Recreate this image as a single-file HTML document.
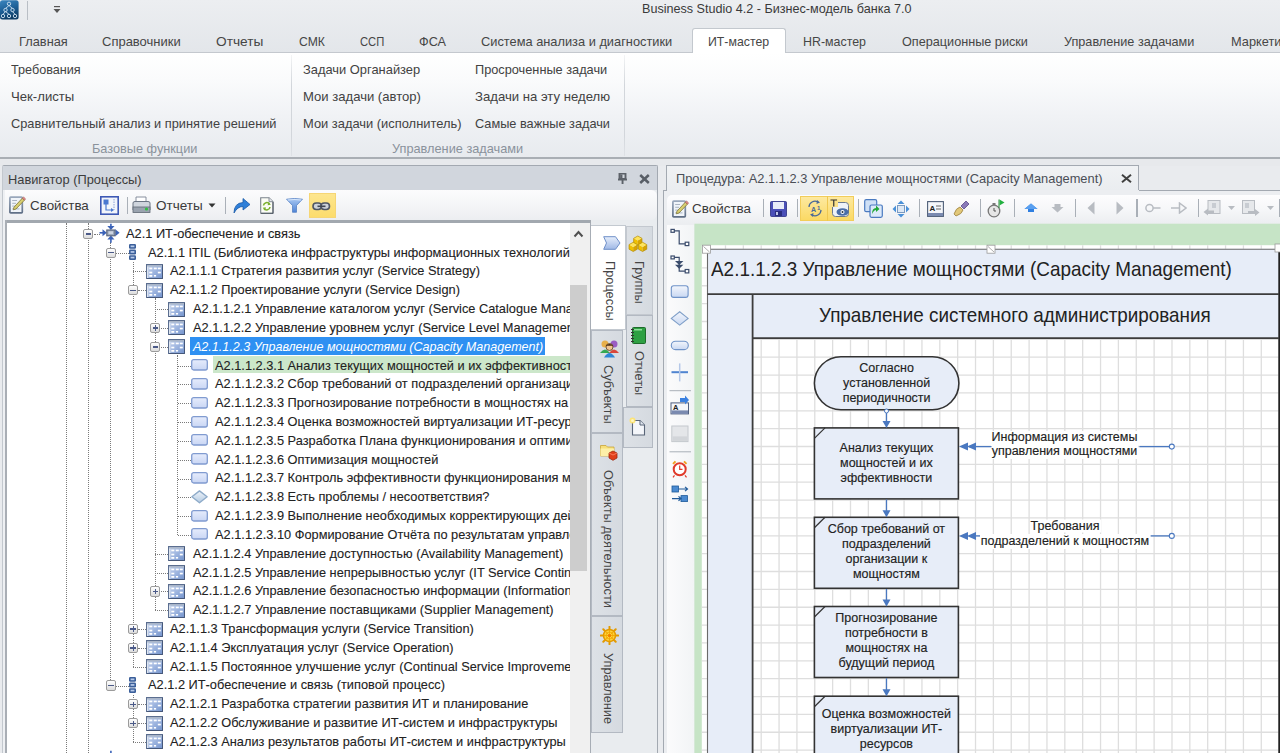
<!DOCTYPE html>
<html><head><meta charset="utf-8"><style>
html,body{margin:0;padding:0}
body{width:1280px;height:753px;overflow:hidden;position:relative;background:#e9ebee;font-family:"Liberation Sans",sans-serif}
.a{position:absolute}
.t{position:absolute;white-space:nowrap;line-height:1}
.vl{width:0;border-left:1px dotted #7a7a7a}
.hl{height:0;border-top:1px dotted #7a7a7a}
.exp{width:10.2px;height:10.2px;box-sizing:border-box;border:1px solid #9b9b9b;border-radius:2px;background:linear-gradient(#ffffff,#dcdcdc)}
</style></head><body>
<div class="a" style="left:0.0px;top:0.0px;width:1280.0px;height:53.0px;background:linear-gradient(#eceef1,#e3e6ea)"></div>
<svg class="a" style="left:0;top:0" width="19" height="20" viewBox="0 0 19 20">
<defs><linearGradient id="appg" x1="0" y1="0" x2="0.3" y2="1"><stop offset="0" stop-color="#3b86bf"/><stop offset="0.55" stop-color="#1d5f96"/><stop offset="1" stop-color="#0f3e66"/></linearGradient></defs>
<rect x="0" y="0.3" width="18.6" height="19.3" rx="2.5" fill="url(#appg)"/>
<g stroke="#cfe2f2" stroke-width="0.9" fill="none"><path d="M9 5.5 L5.5 8.5 M9 5.5 L12.5 8.5 M5.5 11.5 L3 14.3 M5.5 11.5 L9 14.3 M12.5 11.5 L15 14.3"/>
<circle cx="9" cy="3.8" r="1.7"/><circle cx="5.5" cy="10" r="1.7"/><circle cx="12.5" cy="10" r="1.7"/>
<circle cx="3" cy="16" r="1.7"/><circle cx="9" cy="16" r="1.7"/><circle cx="15" cy="16" r="1.7"/></g></svg>
<div class="a" style="left:27.0px;top:1.0px;width:1.0px;height:19.0px;background:#b9bec5"></div>
<svg class="a" style="left:53px;top:5px" width="8" height="9"><rect x="1" y="1" width="6" height="1.2" fill="#555"/><path d="M0.5 4 L7.5 4 L4 8 Z" fill="#555"/></svg>
<div class="t" style="left:641.7px;top:1.8px;font-size:13.14px;color:#3a3a3a;;transform:scaleX(0.9597);transform-origin:0 0;">Business Studio 4.2 - Бизнес-модель банка 7.0</div>
<div class="a" style="left:692.3px;top:27.7px;width:93.3px;height:26.0px;background:#fff;border:1px solid #c3c8ce;border-bottom:none;border-radius:3px 3px 0 0;box-sizing:border-box"></div>
<div class="a" style="left:0.0px;top:52.0px;width:692.3px;height:1.0px;background:#c4c8ce"></div>
<div class="a" style="left:785.6px;top:52.0px;width:494.4px;height:1.0px;background:#c4c8ce"></div>
<div class="t" style="left:18.7px;top:35.1px;font-size:13.30px;color:#464646;;transform:scaleX(0.9640);transform-origin:0 0;">Главная</div>
<div class="t" style="left:102.4px;top:35.1px;font-size:13.30px;color:#464646;;transform:scaleX(0.9769);transform-origin:0 0;">Справочники</div>
<div class="t" style="left:216.3px;top:35.1px;font-size:13.30px;color:#464646;;transform:scaleX(1.0290);transform-origin:0 0;">Отчеты</div>
<div class="t" style="left:298.8px;top:35.1px;font-size:13.30px;color:#464646;;transform:scaleX(0.9158);transform-origin:0 0;">СМК</div>
<div class="t" style="left:360.0px;top:35.1px;font-size:13.30px;color:#464646;;transform:scaleX(0.8448);transform-origin:0 0;">ССП</div>
<div class="t" style="left:419.2px;top:35.1px;font-size:13.30px;color:#464646;;transform:scaleX(0.9542);transform-origin:0 0;">ФСА</div>
<div class="t" style="left:480.6px;top:35.1px;font-size:13.30px;color:#464646;;transform:scaleX(0.9634);transform-origin:0 0;">Система анализа и диагностики</div>
<div class="t" style="left:707.5px;top:35.1px;font-size:13.30px;color:#464646;;transform:scaleX(0.9253);transform-origin:0 0;">ИТ-мастер</div>
<div class="t" style="left:803.0px;top:35.1px;font-size:13.30px;color:#464646;;transform:scaleX(0.9325);transform-origin:0 0;">HR-мастер</div>
<div class="t" style="left:901.9px;top:35.1px;font-size:13.30px;color:#464646;;transform:scaleX(0.9522);transform-origin:0 0;">Операционные риски</div>
<div class="t" style="left:1064.4px;top:35.1px;font-size:13.30px;color:#464646;;transform:scaleX(0.9521);transform-origin:0 0;">Управление задачами</div>
<div class="t" style="left:1230.6px;top:35.1px;font-size:13.30px;color:#464646;;transform:scaleX(0.9624);transform-origin:0 0;">Маркетинг</div>
<div class="a" style="left:0.0px;top:53.0px;width:1280.0px;height:105.5px;background:linear-gradient(#ffffff 0%,#fafbfc 25%,#f0f2f5 60%,#e7eaee 100%)"></div>
<div class="a" style="left:0.0px;top:157.2px;width:1280.0px;height:1.8px;background:#a9aeb4"></div>
<div class="a" style="left:0.0px;top:159.0px;width:1280.0px;height:6.5px;background:#e7e9ec"></div>
<div class="a" style="left:290.6px;top:55.0px;width:1.0px;height:101.0px;background:linear-gradient(rgba(200,204,210,0.2),#d2d6db 30%,#d2d6db 80%,rgba(200,204,210,0.3))"></div>
<div class="a" style="left:623.8px;top:55.0px;width:1.0px;height:101.0px;background:linear-gradient(rgba(200,204,210,0.2),#d2d6db 30%,#d2d6db 80%,rgba(200,204,210,0.3))"></div>
<div class="t" style="left:11.2px;top:63.3px;font-size:13.30px;color:#424242;;transform:scaleX(0.9507);transform-origin:0 0;">Требования</div>
<div class="t" style="left:11.2px;top:90.3px;font-size:13.30px;color:#424242;;transform:scaleX(0.9891);transform-origin:0 0;">Чек-листы</div>
<div class="t" style="left:11.2px;top:117.2px;font-size:13.30px;color:#424242;;transform:scaleX(0.9609);transform-origin:0 0;">Сравнительный анализ и принятие решений</div>
<div class="t" style="left:303.4px;top:63.3px;font-size:13.30px;color:#424242;;transform:scaleX(0.9691);transform-origin:0 0;">Задачи Органайзер</div>
<div class="t" style="left:303.4px;top:90.3px;font-size:13.30px;color:#424242;;transform:scaleX(0.9833);transform-origin:0 0;">Мои задачи (автор)</div>
<div class="t" style="left:303.4px;top:117.2px;font-size:13.30px;color:#424242;;transform:scaleX(0.9694);transform-origin:0 0;">Мои задачи (исполнитель)</div>
<div class="t" style="left:475.3px;top:63.3px;font-size:13.30px;color:#424242;;transform:scaleX(0.9589);transform-origin:0 0;">Просроченные задачи</div>
<div class="t" style="left:475.3px;top:90.3px;font-size:13.30px;color:#424242;;transform:scaleX(0.9873);transform-origin:0 0;">Задачи на эту неделю</div>
<div class="t" style="left:475.3px;top:117.2px;font-size:13.30px;color:#424242;;transform:scaleX(0.9585);transform-origin:0 0;">Самые важные задачи</div>
<div class="t" style="left:91.9px;top:141.7px;font-size:13.30px;color:#8a929c;;transform:scaleX(0.9572);transform-origin:0 0;">Базовые функции</div>
<div class="t" style="left:391.9px;top:141.7px;font-size:13.30px;color:#8a929c;;transform:scaleX(0.9586);transform-origin:0 0;">Управление задачами</div>
<div class="a" style="left:2.0px;top:165.2px;width:655.5px;height:588.0px;background:#e9ecef;border:1px solid #a3a9b1;border-left-color:#c3c8ce;border-bottom:none;box-sizing:border-box;border-radius:2px 2px 0 0"></div>
<div class="a" style="left:3.0px;top:166.2px;width:653.5px;height:24.0px;background:#d1d6dd"></div>
<div class="t" style="left:8.4px;top:172.5px;font-size:13.30px;color:#3c3c3c;;transform:scaleX(0.9646);transform-origin:0 0;">Навигатор (Процессы)</div>
<svg class="a" style="left:617.5px;top:172.5px" width="9" height="11" viewBox="0 0 9 11"><path d="M1.5 0.5 H7.5 V6 H1.5Z M3.5 1.8 V5.5" fill="none" stroke="#5c6269" stroke-width="1.9"/><rect x="0" y="5.6" width="9" height="1.9" fill="#5c6269"/><rect x="3.6" y="7" width="1.9" height="4" fill="#5c6269"/></svg>
<svg class="a" style="left:639px;top:173.5px" width="11" height="10" viewBox="0 0 11 10"><path d="M1.2 1 L9.8 9 M9.8 1 L1.2 9" stroke="#585e66" stroke-width="2.5"/></svg>
<div class="a" style="left:3.0px;top:190.3px;width:653.5px;height:30.0px;background:linear-gradient(#fcfcfd,#f3f4f6 60%,#eceef1);border-radius:0 6px 6px 0"></div>
<div class="a" style="left:4.8px;top:220.3px;width:586.0px;height:2.8px;background:#a2a8af"></div>
<div class="a" style="left:6.8px;top:223.1px;width:563.5px;height:530.0px;background:#fff"></div>
<div class="a" style="left:3.0px;top:190.0px;width:1.8px;height:563.0px;background:#eef0f3"></div>
<div class="a" style="left:4.8px;top:220.3px;width:2.0px;height:533.0px;background:#a9aeb5"></div>
<div class="a" style="left:569.5px;top:222.7px;width:20.0px;height:531.0px;background:#f0f0f0"></div>
<div class="a" style="left:570.0px;top:285.1px;width:17.0px;height:285.8px;background:#cdcdcd"></div>
<svg class="a" style="left:573px;top:230px" width="11" height="8" viewBox="0 0 11 8"><path d="M1.5 6.5 L5.5 2 L9.5 6.5" stroke="#505050" stroke-width="2" fill="none"/></svg>
<div class="a" style="left:589.5px;top:222.7px;width:1.6px;height:531.0px;background:#a7adb5"></div>
<div class="a" style="left:5px;top:222.7px;width:565px;height:531px;overflow:hidden"><div class="a vl" style="left:60.9px;top:0.0px;height:530.3px"></div>
<div class="a vl" style="left:83.4px;top:0.0px;height:530.3px"></div>
<div class="a vl" style="left:105.3px;top:19.2px;height:443.7px"></div>
<div class="a vl" style="left:127.6px;top:39.0px;height:405.0px"></div>
<div class="a vl" style="left:127.6px;top:471.9px;height:47.5px"></div>
<div class="a vl" style="left:150.0px;top:75.7px;height:311.9px"></div>
<div class="a vl" style="left:172.3px;top:132.1px;height:180.2px"></div>
<div class="a hl" style="left:88.6px;top:11.2px;width:6.4px"></div>
<div class="a exp" style="left:78.3px;top:6.1px"></div><div class="a" style="left:80.8px;top:10.6px;width:5.5px;height:1.4px;background:#4b5a88"></div>
<svg class="a" style="left:93.0px;top:-0.7px" width="22" height="22" viewBox="0 0 22 22">
<g fill="#3a62b8"><path d="M12.9 1.8 V5" stroke="#3a62b8" stroke-width="1.6"/><path d="M9.3 4 H16.5 L12.9 8 Z"/>
<path d="M12.9 17 V20.8" stroke="#3a62b8" stroke-width="1.6"/><path d="M9.3 17.5 H16.5 L12.9 13.6 Z"/>
<path d="M1.5 10.8 H5.5" stroke="#3a62b8" stroke-width="1.6"/><path d="M4.5 7.3 L8.8 10.8 L4.5 14.3 Z"/>
<path d="M17.3 7.3 L21.6 10.8 L17.3 14.3 Z"/></g>
<rect x="8.8" y="8" width="8.2" height="5.8" fill="#9aa6b8" stroke="#56627a" stroke-width="1.1"/><rect x="10.5" y="9.3" width="4.5" height="2.8" fill="#cdd5e2"/></svg>
<div class="t" style="left:120.6px;top:4.1px;font-size:13.30px;color:#222;-webkit-text-stroke:0.1px #222;transform:scaleX(0.9624);transform-origin:0 0;">A2.1 ИТ-обеспечение и связь</div>
<div class="a hl" style="left:110.9px;top:30.0px;width:12.9px"></div>
<div class="a exp" style="left:100.6px;top:24.9px"></div><div class="a" style="left:103.1px;top:29.4px;width:5.5px;height:1.4px;background:#4b5a88"></div>
<svg class="a" style="left:123.8px;top:21.4px" width="8" height="17" viewBox="0 0 8 17">
<g fill="#3b5f9a"><rect x="0" y="0" width="7" height="4.8" rx="1.2"/><rect x="0" y="5.6" width="7" height="4.8" rx="1.2"/><rect x="0" y="11.2" width="7" height="4.8" rx="1.2"/></g>
<g fill="#b8cbea"><rect x="1.6" y="1.5" width="3.8" height="1.7"/><rect x="1.6" y="7.1" width="3.8" height="1.7"/><rect x="1.6" y="12.7" width="3.8" height="1.7"/></g></svg>
<div class="t" style="left:142.9px;top:23.0px;font-size:13.30px;color:#222;-webkit-text-stroke:0.1px #222;transform:scaleX(0.9624);transform-origin:0 0;">A2.1.1 ITIL (Библиотека инфраструктуры информационных технологий)</div>
<div class="a hl" style="left:128.0px;top:48.8px;width:12.8px"></div>
<svg class="a" style="left:140.8px;top:41.3px" width="17" height="15" viewBox="0 0 17 15">
<defs><linearGradient id="dg2" x1="0" y1="0" x2="1" y2="1"><stop offset="0" stop-color="#c9d6ee"/><stop offset="0.5" stop-color="#9fb6e0"/><stop offset="1" stop-color="#7393cc"/></linearGradient></defs>
<rect x="0.5" y="0.5" width="16" height="14" fill="url(#dg2)" stroke="#5b6e90" stroke-width="1"/>
<rect x="1" y="1" width="15" height="1.6" fill="#aab6c9"/><rect x="1" y="2.6" width="1.4" height="11.4" fill="#dde4ef"/>
<g fill="#fff"><rect x="3.3" y="3.6" width="3" height="1.7"/><rect x="7.8" y="3.6" width="3" height="1.7"/><rect x="11.8" y="3.6" width="3" height="1.7"/><rect x="3.3" y="7.7" width="3" height="1.7"/><rect x="11.8" y="7.7" width="3" height="1.7"/><rect x="3.3" y="11" width="3" height="1.8"/><rect x="7.9" y="11" width="2.2" height="1.6"/></g>
<path d="M16.5 1 V14.5 H1" stroke="#46587a" stroke-width="1" fill="none"/></svg>
<div class="t" style="left:165.2px;top:41.8px;font-size:13.30px;color:#222;-webkit-text-stroke:0.1px #222;transform:scaleX(0.9624);transform-origin:0 0;">A2.1.1.1 Стратегия развития услуг (Service Strategy)</div>
<div class="a hl" style="left:133.2px;top:67.7px;width:7.6px"></div>
<div class="a exp" style="left:122.9px;top:62.6px"></div><div class="a" style="left:125.4px;top:67.1px;width:5.5px;height:1.4px;background:#4b5a88"></div>
<svg class="a" style="left:140.8px;top:60.2px" width="17" height="15" viewBox="0 0 17 15">
<defs><linearGradient id="dg3" x1="0" y1="0" x2="1" y2="1"><stop offset="0" stop-color="#c9d6ee"/><stop offset="0.5" stop-color="#9fb6e0"/><stop offset="1" stop-color="#7393cc"/></linearGradient></defs>
<rect x="0.5" y="0.5" width="16" height="14" fill="url(#dg3)" stroke="#5b6e90" stroke-width="1"/>
<rect x="1" y="1" width="15" height="1.6" fill="#aab6c9"/><rect x="1" y="2.6" width="1.4" height="11.4" fill="#dde4ef"/>
<g fill="#fff"><rect x="3.3" y="3.6" width="3" height="1.7"/><rect x="7.8" y="3.6" width="3" height="1.7"/><rect x="11.8" y="3.6" width="3" height="1.7"/><rect x="3.3" y="7.7" width="3" height="1.7"/><rect x="11.8" y="7.7" width="3" height="1.7"/><rect x="3.3" y="11" width="3" height="1.8"/><rect x="7.9" y="11" width="2.2" height="1.6"/></g>
<path d="M16.5 1 V14.5 H1" stroke="#46587a" stroke-width="1" fill="none"/></svg>
<div class="t" style="left:165.2px;top:60.6px;font-size:13.30px;color:#222;-webkit-text-stroke:0.1px #222;transform:scaleX(0.9624);transform-origin:0 0;">A2.1.1.2 Проектирование услуги (Service Design)</div>
<div class="a hl" style="left:150.3px;top:86.5px;width:12.8px"></div>
<svg class="a" style="left:163.1px;top:79.0px" width="17" height="15" viewBox="0 0 17 15">
<defs><linearGradient id="dg4" x1="0" y1="0" x2="1" y2="1"><stop offset="0" stop-color="#c9d6ee"/><stop offset="0.5" stop-color="#9fb6e0"/><stop offset="1" stop-color="#7393cc"/></linearGradient></defs>
<rect x="0.5" y="0.5" width="16" height="14" fill="url(#dg4)" stroke="#5b6e90" stroke-width="1"/>
<rect x="1" y="1" width="15" height="1.6" fill="#aab6c9"/><rect x="1" y="2.6" width="1.4" height="11.4" fill="#dde4ef"/>
<g fill="#fff"><rect x="3.3" y="3.6" width="3" height="1.7"/><rect x="7.8" y="3.6" width="3" height="1.7"/><rect x="11.8" y="3.6" width="3" height="1.7"/><rect x="3.3" y="7.7" width="3" height="1.7"/><rect x="11.8" y="7.7" width="3" height="1.7"/><rect x="3.3" y="11" width="3" height="1.8"/><rect x="7.9" y="11" width="2.2" height="1.6"/></g>
<path d="M16.5 1 V14.5 H1" stroke="#46587a" stroke-width="1" fill="none"/></svg>
<div class="t" style="left:187.5px;top:79.4px;font-size:13.30px;color:#222;-webkit-text-stroke:0.1px #222;transform:scaleX(0.9624);transform-origin:0 0;">A2.1.1.2.1 Управление каталогом услуг (Service Catalogue Management)</div>
<div class="a hl" style="left:155.5px;top:105.3px;width:7.6px"></div>
<div class="a exp" style="left:145.2px;top:100.2px"></div><div class="a" style="left:147.7px;top:104.7px;width:5.5px;height:1.4px;background:#4b5a88"></div><div class="a" style="left:149.8px;top:102.7px;width:1.4px;height:5.5px;background:#4b5a88"></div>
<svg class="a" style="left:163.1px;top:97.8px" width="17" height="15" viewBox="0 0 17 15">
<defs><linearGradient id="dg5" x1="0" y1="0" x2="1" y2="1"><stop offset="0" stop-color="#c9d6ee"/><stop offset="0.5" stop-color="#9fb6e0"/><stop offset="1" stop-color="#7393cc"/></linearGradient></defs>
<rect x="0.5" y="0.5" width="16" height="14" fill="url(#dg5)" stroke="#5b6e90" stroke-width="1"/>
<rect x="1" y="1" width="15" height="1.6" fill="#aab6c9"/><rect x="1" y="2.6" width="1.4" height="11.4" fill="#dde4ef"/>
<g fill="#fff"><rect x="3.3" y="3.6" width="3" height="1.7"/><rect x="7.8" y="3.6" width="3" height="1.7"/><rect x="11.8" y="3.6" width="3" height="1.7"/><rect x="3.3" y="7.7" width="3" height="1.7"/><rect x="11.8" y="7.7" width="3" height="1.7"/><rect x="3.3" y="11" width="3" height="1.8"/><rect x="7.9" y="11" width="2.2" height="1.6"/></g>
<path d="M16.5 1 V14.5 H1" stroke="#46587a" stroke-width="1" fill="none"/></svg>
<div class="t" style="left:187.5px;top:98.2px;font-size:13.30px;color:#222;-webkit-text-stroke:0.1px #222;transform:scaleX(0.9624);transform-origin:0 0;">A2.1.1.2.2 Управление уровнем услуг (Service Level Management)</div>
<div class="a hl" style="left:155.5px;top:124.1px;width:7.6px"></div>
<div class="a exp" style="left:145.2px;top:119.0px"></div><div class="a" style="left:147.7px;top:123.5px;width:5.5px;height:1.4px;background:#4b5a88"></div>
<svg class="a" style="left:163.1px;top:116.6px" width="17" height="15" viewBox="0 0 17 15">
<defs><linearGradient id="dg6" x1="0" y1="0" x2="1" y2="1"><stop offset="0" stop-color="#c9d6ee"/><stop offset="0.5" stop-color="#9fb6e0"/><stop offset="1" stop-color="#7393cc"/></linearGradient></defs>
<rect x="0.5" y="0.5" width="16" height="14" fill="url(#dg6)" stroke="#5b6e90" stroke-width="1"/>
<rect x="1" y="1" width="15" height="1.6" fill="#aab6c9"/><rect x="1" y="2.6" width="1.4" height="11.4" fill="#dde4ef"/>
<g fill="#fff"><rect x="3.3" y="3.6" width="3" height="1.7"/><rect x="7.8" y="3.6" width="3" height="1.7"/><rect x="11.8" y="3.6" width="3" height="1.7"/><rect x="3.3" y="7.7" width="3" height="1.7"/><rect x="11.8" y="7.7" width="3" height="1.7"/><rect x="3.3" y="11" width="3" height="1.8"/><rect x="7.9" y="11" width="2.2" height="1.6"/></g>
<path d="M16.5 1 V14.5 H1" stroke="#46587a" stroke-width="1" fill="none"/></svg>
<div class="a" style="left:184.9px;top:114.5px;width:355.3px;height:17.8px;background:#2e90f2"></div>
<div class="t" style="left:187.5px;top:117.3px;font-size:13.04px;color:#fff;font-style:italic;transform:scaleX(0.9624);transform-origin:0 0;">A2.1.1.2.3 Управление мощностями (Capacity Management)</div>
<div class="a hl" style="left:172.6px;top:142.9px;width:13.4px"></div>
<svg class="a" style="left:186.0px;top:136.4px" width="17" height="12" viewBox="0 0 17 12">
<defs><linearGradient id="rg7" x1="0" y1="0" x2="0" y2="1"><stop offset="0" stop-color="#e6ecfc"/><stop offset="1" stop-color="#c9d6f4"/></linearGradient></defs>
<rect x="0.7" y="0.7" width="15.6" height="10.3" rx="2" fill="url(#rg7)" stroke="#809bd0" stroke-width="1.3"/></svg>
<div class="a" style="left:207.5px;top:133.0px;width:400.0px;height:17.6px;background:#cce7ca"></div>
<div class="t" style="left:209.8px;top:135.9px;font-size:13.30px;color:#222;-webkit-text-stroke:0.1px #222;transform:scaleX(0.9624);transform-origin:0 0;">A2.1.1.2.3.1 Анализ текущих мощностей и их эффективности</div>
<div class="a hl" style="left:172.6px;top:161.8px;width:13.4px"></div>
<svg class="a" style="left:186.0px;top:155.3px" width="17" height="12" viewBox="0 0 17 12">
<defs><linearGradient id="rg8" x1="0" y1="0" x2="0" y2="1"><stop offset="0" stop-color="#e6ecfc"/><stop offset="1" stop-color="#c9d6f4"/></linearGradient></defs>
<rect x="0.7" y="0.7" width="15.6" height="10.3" rx="2" fill="url(#rg8)" stroke="#809bd0" stroke-width="1.3"/></svg>
<div class="t" style="left:209.8px;top:154.7px;font-size:13.30px;color:#222;-webkit-text-stroke:0.1px #222;transform:scaleX(0.9624);transform-origin:0 0;">A2.1.1.2.3.2 Сбор требований от подразделений организации к мощностям</div>
<div class="a hl" style="left:172.6px;top:180.6px;width:13.4px"></div>
<svg class="a" style="left:186.0px;top:174.1px" width="17" height="12" viewBox="0 0 17 12">
<defs><linearGradient id="rg9" x1="0" y1="0" x2="0" y2="1"><stop offset="0" stop-color="#e6ecfc"/><stop offset="1" stop-color="#c9d6f4"/></linearGradient></defs>
<rect x="0.7" y="0.7" width="15.6" height="10.3" rx="2" fill="url(#rg9)" stroke="#809bd0" stroke-width="1.3"/></svg>
<div class="t" style="left:209.8px;top:173.5px;font-size:13.30px;color:#222;-webkit-text-stroke:0.1px #222;transform:scaleX(0.9624);transform-origin:0 0;">A2.1.1.2.3.3 Прогнозирование потребности в мощностях на будущий период</div>
<div class="a hl" style="left:172.6px;top:199.4px;width:13.4px"></div>
<svg class="a" style="left:186.0px;top:192.9px" width="17" height="12" viewBox="0 0 17 12">
<defs><linearGradient id="rg10" x1="0" y1="0" x2="0" y2="1"><stop offset="0" stop-color="#e6ecfc"/><stop offset="1" stop-color="#c9d6f4"/></linearGradient></defs>
<rect x="0.7" y="0.7" width="15.6" height="10.3" rx="2" fill="url(#rg10)" stroke="#809bd0" stroke-width="1.3"/></svg>
<div class="t" style="left:209.8px;top:192.3px;font-size:13.30px;color:#222;-webkit-text-stroke:0.1px #222;transform:scaleX(0.9624);transform-origin:0 0;">A2.1.1.2.3.4 Оценка возможностей виртуализации ИТ-ресурсов</div>
<div class="a hl" style="left:172.6px;top:218.2px;width:13.4px"></div>
<svg class="a" style="left:186.0px;top:211.7px" width="17" height="12" viewBox="0 0 17 12">
<defs><linearGradient id="rg11" x1="0" y1="0" x2="0" y2="1"><stop offset="0" stop-color="#e6ecfc"/><stop offset="1" stop-color="#c9d6f4"/></linearGradient></defs>
<rect x="0.7" y="0.7" width="15.6" height="10.3" rx="2" fill="url(#rg11)" stroke="#809bd0" stroke-width="1.3"/></svg>
<div class="t" style="left:209.8px;top:211.2px;font-size:13.30px;color:#222;-webkit-text-stroke:0.1px #222;transform:scaleX(0.9624);transform-origin:0 0;">A2.1.1.2.3.5 Разработка Плана функционирования и оптимизации</div>
<div class="a hl" style="left:172.6px;top:237.0px;width:13.4px"></div>
<svg class="a" style="left:186.0px;top:230.5px" width="17" height="12" viewBox="0 0 17 12">
<defs><linearGradient id="rg12" x1="0" y1="0" x2="0" y2="1"><stop offset="0" stop-color="#e6ecfc"/><stop offset="1" stop-color="#c9d6f4"/></linearGradient></defs>
<rect x="0.7" y="0.7" width="15.6" height="10.3" rx="2" fill="url(#rg12)" stroke="#809bd0" stroke-width="1.3"/></svg>
<div class="t" style="left:209.8px;top:230.0px;font-size:13.30px;color:#222;-webkit-text-stroke:0.1px #222;transform:scaleX(0.9624);transform-origin:0 0;">A2.1.1.2.3.6 Оптимизация мощностей</div>
<div class="a hl" style="left:172.6px;top:255.9px;width:13.4px"></div>
<svg class="a" style="left:186.0px;top:249.4px" width="17" height="12" viewBox="0 0 17 12">
<defs><linearGradient id="rg13" x1="0" y1="0" x2="0" y2="1"><stop offset="0" stop-color="#e6ecfc"/><stop offset="1" stop-color="#c9d6f4"/></linearGradient></defs>
<rect x="0.7" y="0.7" width="15.6" height="10.3" rx="2" fill="url(#rg13)" stroke="#809bd0" stroke-width="1.3"/></svg>
<div class="t" style="left:209.8px;top:248.8px;font-size:13.30px;color:#222;-webkit-text-stroke:0.1px #222;transform:scaleX(0.9624);transform-origin:0 0;">A2.1.1.2.3.7 Контроль эффективности функционирования мощностей</div>
<div class="a hl" style="left:172.6px;top:274.7px;width:13.4px"></div>
<svg class="a" style="left:186.0px;top:267.2px" width="17" height="14" viewBox="0 0 17 14">
<defs><linearGradient id="mg14" x1="0" y1="0" x2="0" y2="1"><stop offset="0" stop-color="#eef3f9"/><stop offset="1" stop-color="#b4cbe3"/></linearGradient></defs>
<path d="M0.9 6.8 L8.5 0.9 L16.1 6.8 L8.5 12.7 Z" fill="url(#mg14)" stroke="#8eabc9" stroke-width="1.4" stroke-linejoin="round"/></svg>
<div class="t" style="left:209.8px;top:267.6px;font-size:13.30px;color:#222;-webkit-text-stroke:0.1px #222;transform:scaleX(0.9624);transform-origin:0 0;">A2.1.1.2.3.8 Есть проблемы / несоответствия?</div>
<div class="a hl" style="left:172.6px;top:293.5px;width:13.4px"></div>
<svg class="a" style="left:186.0px;top:287.0px" width="17" height="12" viewBox="0 0 17 12">
<defs><linearGradient id="rg15" x1="0" y1="0" x2="0" y2="1"><stop offset="0" stop-color="#e6ecfc"/><stop offset="1" stop-color="#c9d6f4"/></linearGradient></defs>
<rect x="0.7" y="0.7" width="15.6" height="10.3" rx="2" fill="url(#rg15)" stroke="#809bd0" stroke-width="1.3"/></svg>
<div class="t" style="left:209.8px;top:286.4px;font-size:13.30px;color:#222;-webkit-text-stroke:0.1px #222;transform:scaleX(0.9624);transform-origin:0 0;">A2.1.1.2.3.9 Выполнение необходимых корректирующих действий</div>
<div class="a hl" style="left:172.6px;top:312.3px;width:13.4px"></div>
<svg class="a" style="left:186.0px;top:305.8px" width="17" height="12" viewBox="0 0 17 12">
<defs><linearGradient id="rg16" x1="0" y1="0" x2="0" y2="1"><stop offset="0" stop-color="#e6ecfc"/><stop offset="1" stop-color="#c9d6f4"/></linearGradient></defs>
<rect x="0.7" y="0.7" width="15.6" height="10.3" rx="2" fill="url(#rg16)" stroke="#809bd0" stroke-width="1.3"/></svg>
<div class="t" style="left:209.8px;top:305.3px;font-size:13.30px;color:#222;-webkit-text-stroke:0.1px #222;transform:scaleX(0.9624);transform-origin:0 0;">A2.1.1.2.3.10 Формирование Отчёта по результатам управления</div>
<div class="a hl" style="left:150.3px;top:331.1px;width:12.8px"></div>
<svg class="a" style="left:163.1px;top:323.6px" width="17" height="15" viewBox="0 0 17 15">
<defs><linearGradient id="dg17" x1="0" y1="0" x2="1" y2="1"><stop offset="0" stop-color="#c9d6ee"/><stop offset="0.5" stop-color="#9fb6e0"/><stop offset="1" stop-color="#7393cc"/></linearGradient></defs>
<rect x="0.5" y="0.5" width="16" height="14" fill="url(#dg17)" stroke="#5b6e90" stroke-width="1"/>
<rect x="1" y="1" width="15" height="1.6" fill="#aab6c9"/><rect x="1" y="2.6" width="1.4" height="11.4" fill="#dde4ef"/>
<g fill="#fff"><rect x="3.3" y="3.6" width="3" height="1.7"/><rect x="7.8" y="3.6" width="3" height="1.7"/><rect x="11.8" y="3.6" width="3" height="1.7"/><rect x="3.3" y="7.7" width="3" height="1.7"/><rect x="11.8" y="7.7" width="3" height="1.7"/><rect x="3.3" y="11" width="3" height="1.8"/><rect x="7.9" y="11" width="2.2" height="1.6"/></g>
<path d="M16.5 1 V14.5 H1" stroke="#46587a" stroke-width="1" fill="none"/></svg>
<div class="t" style="left:187.5px;top:324.1px;font-size:13.30px;color:#222;-webkit-text-stroke:0.1px #222;transform:scaleX(0.9624);transform-origin:0 0;">A2.1.1.2.4 Управление доступностью (Availability Management)</div>
<div class="a hl" style="left:150.3px;top:350.0px;width:12.8px"></div>
<svg class="a" style="left:163.1px;top:342.5px" width="17" height="15" viewBox="0 0 17 15">
<defs><linearGradient id="dg18" x1="0" y1="0" x2="1" y2="1"><stop offset="0" stop-color="#c9d6ee"/><stop offset="0.5" stop-color="#9fb6e0"/><stop offset="1" stop-color="#7393cc"/></linearGradient></defs>
<rect x="0.5" y="0.5" width="16" height="14" fill="url(#dg18)" stroke="#5b6e90" stroke-width="1"/>
<rect x="1" y="1" width="15" height="1.6" fill="#aab6c9"/><rect x="1" y="2.6" width="1.4" height="11.4" fill="#dde4ef"/>
<g fill="#fff"><rect x="3.3" y="3.6" width="3" height="1.7"/><rect x="7.8" y="3.6" width="3" height="1.7"/><rect x="11.8" y="3.6" width="3" height="1.7"/><rect x="3.3" y="7.7" width="3" height="1.7"/><rect x="11.8" y="7.7" width="3" height="1.7"/><rect x="3.3" y="11" width="3" height="1.8"/><rect x="7.9" y="11" width="2.2" height="1.6"/></g>
<path d="M16.5 1 V14.5 H1" stroke="#46587a" stroke-width="1" fill="none"/></svg>
<div class="t" style="left:187.5px;top:342.9px;font-size:13.30px;color:#222;-webkit-text-stroke:0.1px #222;transform:scaleX(0.9624);transform-origin:0 0;">A2.1.1.2.5 Управление непрерывностью услуг (IT Service Continuity Management)</div>
<div class="a hl" style="left:155.5px;top:368.8px;width:7.6px"></div>
<div class="a exp" style="left:145.2px;top:363.7px"></div><div class="a" style="left:147.7px;top:368.2px;width:5.5px;height:1.4px;background:#4b5a88"></div><div class="a" style="left:149.8px;top:366.2px;width:1.4px;height:5.5px;background:#4b5a88"></div>
<svg class="a" style="left:163.1px;top:361.3px" width="17" height="15" viewBox="0 0 17 15">
<defs><linearGradient id="dg19" x1="0" y1="0" x2="1" y2="1"><stop offset="0" stop-color="#c9d6ee"/><stop offset="0.5" stop-color="#9fb6e0"/><stop offset="1" stop-color="#7393cc"/></linearGradient></defs>
<rect x="0.5" y="0.5" width="16" height="14" fill="url(#dg19)" stroke="#5b6e90" stroke-width="1"/>
<rect x="1" y="1" width="15" height="1.6" fill="#aab6c9"/><rect x="1" y="2.6" width="1.4" height="11.4" fill="#dde4ef"/>
<g fill="#fff"><rect x="3.3" y="3.6" width="3" height="1.7"/><rect x="7.8" y="3.6" width="3" height="1.7"/><rect x="11.8" y="3.6" width="3" height="1.7"/><rect x="3.3" y="7.7" width="3" height="1.7"/><rect x="11.8" y="7.7" width="3" height="1.7"/><rect x="3.3" y="11" width="3" height="1.8"/><rect x="7.9" y="11" width="2.2" height="1.6"/></g>
<path d="M16.5 1 V14.5 H1" stroke="#46587a" stroke-width="1" fill="none"/></svg>
<div class="t" style="left:187.5px;top:361.7px;font-size:13.30px;color:#222;-webkit-text-stroke:0.1px #222;transform:scaleX(0.9624);transform-origin:0 0;">A2.1.1.2.6 Управление безопасностью информации (Information Security Management)</div>
<div class="a hl" style="left:150.3px;top:387.6px;width:12.8px"></div>
<svg class="a" style="left:163.1px;top:380.1px" width="17" height="15" viewBox="0 0 17 15">
<defs><linearGradient id="dg20" x1="0" y1="0" x2="1" y2="1"><stop offset="0" stop-color="#c9d6ee"/><stop offset="0.5" stop-color="#9fb6e0"/><stop offset="1" stop-color="#7393cc"/></linearGradient></defs>
<rect x="0.5" y="0.5" width="16" height="14" fill="url(#dg20)" stroke="#5b6e90" stroke-width="1"/>
<rect x="1" y="1" width="15" height="1.6" fill="#aab6c9"/><rect x="1" y="2.6" width="1.4" height="11.4" fill="#dde4ef"/>
<g fill="#fff"><rect x="3.3" y="3.6" width="3" height="1.7"/><rect x="7.8" y="3.6" width="3" height="1.7"/><rect x="11.8" y="3.6" width="3" height="1.7"/><rect x="3.3" y="7.7" width="3" height="1.7"/><rect x="11.8" y="7.7" width="3" height="1.7"/><rect x="3.3" y="11" width="3" height="1.8"/><rect x="7.9" y="11" width="2.2" height="1.6"/></g>
<path d="M16.5 1 V14.5 H1" stroke="#46587a" stroke-width="1" fill="none"/></svg>
<div class="t" style="left:187.5px;top:380.5px;font-size:13.30px;color:#222;-webkit-text-stroke:0.1px #222;transform:scaleX(0.9624);transform-origin:0 0;">A2.1.1.2.7 Управление поставщиками (Supplier Management)</div>
<div class="a hl" style="left:133.2px;top:406.4px;width:7.6px"></div>
<div class="a exp" style="left:122.9px;top:401.3px"></div><div class="a" style="left:125.4px;top:405.8px;width:5.5px;height:1.4px;background:#4b5a88"></div><div class="a" style="left:127.5px;top:403.8px;width:1.4px;height:5.5px;background:#4b5a88"></div>
<svg class="a" style="left:140.8px;top:398.9px" width="17" height="15" viewBox="0 0 17 15">
<defs><linearGradient id="dg21" x1="0" y1="0" x2="1" y2="1"><stop offset="0" stop-color="#c9d6ee"/><stop offset="0.5" stop-color="#9fb6e0"/><stop offset="1" stop-color="#7393cc"/></linearGradient></defs>
<rect x="0.5" y="0.5" width="16" height="14" fill="url(#dg21)" stroke="#5b6e90" stroke-width="1"/>
<rect x="1" y="1" width="15" height="1.6" fill="#aab6c9"/><rect x="1" y="2.6" width="1.4" height="11.4" fill="#dde4ef"/>
<g fill="#fff"><rect x="3.3" y="3.6" width="3" height="1.7"/><rect x="7.8" y="3.6" width="3" height="1.7"/><rect x="11.8" y="3.6" width="3" height="1.7"/><rect x="3.3" y="7.7" width="3" height="1.7"/><rect x="11.8" y="7.7" width="3" height="1.7"/><rect x="3.3" y="11" width="3" height="1.8"/><rect x="7.9" y="11" width="2.2" height="1.6"/></g>
<path d="M16.5 1 V14.5 H1" stroke="#46587a" stroke-width="1" fill="none"/></svg>
<div class="t" style="left:165.2px;top:399.4px;font-size:13.30px;color:#222;-webkit-text-stroke:0.1px #222;transform:scaleX(0.9624);transform-origin:0 0;">A2.1.1.3 Трансформация услуги (Service Transition)</div>
<div class="a hl" style="left:133.2px;top:425.2px;width:7.6px"></div>
<div class="a exp" style="left:122.9px;top:420.1px"></div><div class="a" style="left:125.4px;top:424.6px;width:5.5px;height:1.4px;background:#4b5a88"></div><div class="a" style="left:127.5px;top:422.6px;width:1.4px;height:5.5px;background:#4b5a88"></div>
<svg class="a" style="left:140.8px;top:417.7px" width="17" height="15" viewBox="0 0 17 15">
<defs><linearGradient id="dg22" x1="0" y1="0" x2="1" y2="1"><stop offset="0" stop-color="#c9d6ee"/><stop offset="0.5" stop-color="#9fb6e0"/><stop offset="1" stop-color="#7393cc"/></linearGradient></defs>
<rect x="0.5" y="0.5" width="16" height="14" fill="url(#dg22)" stroke="#5b6e90" stroke-width="1"/>
<rect x="1" y="1" width="15" height="1.6" fill="#aab6c9"/><rect x="1" y="2.6" width="1.4" height="11.4" fill="#dde4ef"/>
<g fill="#fff"><rect x="3.3" y="3.6" width="3" height="1.7"/><rect x="7.8" y="3.6" width="3" height="1.7"/><rect x="11.8" y="3.6" width="3" height="1.7"/><rect x="3.3" y="7.7" width="3" height="1.7"/><rect x="11.8" y="7.7" width="3" height="1.7"/><rect x="3.3" y="11" width="3" height="1.8"/><rect x="7.9" y="11" width="2.2" height="1.6"/></g>
<path d="M16.5 1 V14.5 H1" stroke="#46587a" stroke-width="1" fill="none"/></svg>
<div class="t" style="left:165.2px;top:418.2px;font-size:13.30px;color:#222;-webkit-text-stroke:0.1px #222;transform:scaleX(0.9624);transform-origin:0 0;">A2.1.1.4 Эксплуатация услуг (Service Operation)</div>
<div class="a hl" style="left:128.0px;top:444.1px;width:12.8px"></div>
<svg class="a" style="left:140.8px;top:436.6px" width="17" height="15" viewBox="0 0 17 15">
<defs><linearGradient id="dg23" x1="0" y1="0" x2="1" y2="1"><stop offset="0" stop-color="#c9d6ee"/><stop offset="0.5" stop-color="#9fb6e0"/><stop offset="1" stop-color="#7393cc"/></linearGradient></defs>
<rect x="0.5" y="0.5" width="16" height="14" fill="url(#dg23)" stroke="#5b6e90" stroke-width="1"/>
<rect x="1" y="1" width="15" height="1.6" fill="#aab6c9"/><rect x="1" y="2.6" width="1.4" height="11.4" fill="#dde4ef"/>
<g fill="#fff"><rect x="3.3" y="3.6" width="3" height="1.7"/><rect x="7.8" y="3.6" width="3" height="1.7"/><rect x="11.8" y="3.6" width="3" height="1.7"/><rect x="3.3" y="7.7" width="3" height="1.7"/><rect x="11.8" y="7.7" width="3" height="1.7"/><rect x="3.3" y="11" width="3" height="1.8"/><rect x="7.9" y="11" width="2.2" height="1.6"/></g>
<path d="M16.5 1 V14.5 H1" stroke="#46587a" stroke-width="1" fill="none"/></svg>
<div class="t" style="left:165.2px;top:437.0px;font-size:13.30px;color:#222;-webkit-text-stroke:0.1px #222;transform:scaleX(0.9624);transform-origin:0 0;">A2.1.1.5 Постоянное улучшение услуг (Continual Service Improvement)</div>
<div class="a hl" style="left:110.9px;top:462.9px;width:12.9px"></div>
<div class="a exp" style="left:100.6px;top:457.8px"></div><div class="a" style="left:103.1px;top:462.3px;width:5.5px;height:1.4px;background:#4b5a88"></div>
<svg class="a" style="left:123.8px;top:454.3px" width="8" height="17" viewBox="0 0 8 17">
<g fill="#3b5f9a"><rect x="0" y="0" width="7" height="4.8" rx="1.2"/><rect x="0" y="5.6" width="7" height="4.8" rx="1.2"/><rect x="0" y="11.2" width="7" height="4.8" rx="1.2"/></g>
<g fill="#b8cbea"><rect x="1.6" y="1.5" width="3.8" height="1.7"/><rect x="1.6" y="7.1" width="3.8" height="1.7"/><rect x="1.6" y="12.7" width="3.8" height="1.7"/></g></svg>
<div class="t" style="left:142.9px;top:455.8px;font-size:13.30px;color:#222;-webkit-text-stroke:0.1px #222;transform:scaleX(0.9624);transform-origin:0 0;">A2.1.2 ИТ-обеспечение и связь (типовой процесс)</div>
<div class="a hl" style="left:133.2px;top:481.7px;width:7.6px"></div>
<div class="a exp" style="left:122.9px;top:476.6px"></div><div class="a" style="left:125.4px;top:481.1px;width:5.5px;height:1.4px;background:#4b5a88"></div><div class="a" style="left:127.5px;top:479.1px;width:1.4px;height:5.5px;background:#4b5a88"></div>
<svg class="a" style="left:140.8px;top:474.2px" width="17" height="15" viewBox="0 0 17 15">
<defs><linearGradient id="dg25" x1="0" y1="0" x2="1" y2="1"><stop offset="0" stop-color="#c9d6ee"/><stop offset="0.5" stop-color="#9fb6e0"/><stop offset="1" stop-color="#7393cc"/></linearGradient></defs>
<rect x="0.5" y="0.5" width="16" height="14" fill="url(#dg25)" stroke="#5b6e90" stroke-width="1"/>
<rect x="1" y="1" width="15" height="1.6" fill="#aab6c9"/><rect x="1" y="2.6" width="1.4" height="11.4" fill="#dde4ef"/>
<g fill="#fff"><rect x="3.3" y="3.6" width="3" height="1.7"/><rect x="7.8" y="3.6" width="3" height="1.7"/><rect x="11.8" y="3.6" width="3" height="1.7"/><rect x="3.3" y="7.7" width="3" height="1.7"/><rect x="11.8" y="7.7" width="3" height="1.7"/><rect x="3.3" y="11" width="3" height="1.8"/><rect x="7.9" y="11" width="2.2" height="1.6"/></g>
<path d="M16.5 1 V14.5 H1" stroke="#46587a" stroke-width="1" fill="none"/></svg>
<div class="t" style="left:165.2px;top:474.6px;font-size:13.30px;color:#222;-webkit-text-stroke:0.1px #222;transform:scaleX(0.9624);transform-origin:0 0;">A2.1.2.1 Разработка стратегии развития ИТ и планирование</div>
<div class="a hl" style="left:133.2px;top:500.5px;width:7.6px"></div>
<div class="a exp" style="left:122.9px;top:495.4px"></div><div class="a" style="left:125.4px;top:499.9px;width:5.5px;height:1.4px;background:#4b5a88"></div><div class="a" style="left:127.5px;top:497.9px;width:1.4px;height:5.5px;background:#4b5a88"></div>
<svg class="a" style="left:140.8px;top:493.0px" width="17" height="15" viewBox="0 0 17 15">
<defs><linearGradient id="dg26" x1="0" y1="0" x2="1" y2="1"><stop offset="0" stop-color="#c9d6ee"/><stop offset="0.5" stop-color="#9fb6e0"/><stop offset="1" stop-color="#7393cc"/></linearGradient></defs>
<rect x="0.5" y="0.5" width="16" height="14" fill="url(#dg26)" stroke="#5b6e90" stroke-width="1"/>
<rect x="1" y="1" width="15" height="1.6" fill="#aab6c9"/><rect x="1" y="2.6" width="1.4" height="11.4" fill="#dde4ef"/>
<g fill="#fff"><rect x="3.3" y="3.6" width="3" height="1.7"/><rect x="7.8" y="3.6" width="3" height="1.7"/><rect x="11.8" y="3.6" width="3" height="1.7"/><rect x="3.3" y="7.7" width="3" height="1.7"/><rect x="11.8" y="7.7" width="3" height="1.7"/><rect x="3.3" y="11" width="3" height="1.8"/><rect x="7.9" y="11" width="2.2" height="1.6"/></g>
<path d="M16.5 1 V14.5 H1" stroke="#46587a" stroke-width="1" fill="none"/></svg>
<div class="t" style="left:165.2px;top:493.5px;font-size:13.30px;color:#222;-webkit-text-stroke:0.1px #222;transform:scaleX(0.9624);transform-origin:0 0;">A2.1.2.2 Обслуживание и развитие ИТ-систем и инфраструктуры</div>
<div class="a hl" style="left:128.0px;top:519.3px;width:12.8px"></div>
<svg class="a" style="left:140.8px;top:511.8px" width="17" height="15" viewBox="0 0 17 15">
<defs><linearGradient id="dg27" x1="0" y1="0" x2="1" y2="1"><stop offset="0" stop-color="#c9d6ee"/><stop offset="0.5" stop-color="#9fb6e0"/><stop offset="1" stop-color="#7393cc"/></linearGradient></defs>
<rect x="0.5" y="0.5" width="16" height="14" fill="url(#dg27)" stroke="#5b6e90" stroke-width="1"/>
<rect x="1" y="1" width="15" height="1.6" fill="#aab6c9"/><rect x="1" y="2.6" width="1.4" height="11.4" fill="#dde4ef"/>
<g fill="#fff"><rect x="3.3" y="3.6" width="3" height="1.7"/><rect x="7.8" y="3.6" width="3" height="1.7"/><rect x="11.8" y="3.6" width="3" height="1.7"/><rect x="3.3" y="7.7" width="3" height="1.7"/><rect x="11.8" y="7.7" width="3" height="1.7"/><rect x="3.3" y="11" width="3" height="1.8"/><rect x="7.9" y="11" width="2.2" height="1.6"/></g>
<path d="M16.5 1 V14.5 H1" stroke="#46587a" stroke-width="1" fill="none"/></svg>
<div class="t" style="left:165.2px;top:512.3px;font-size:13.30px;color:#222;-webkit-text-stroke:0.1px #222;transform:scaleX(0.9624);transform-origin:0 0;">A2.1.2.3 Анализ результатов работы ИТ-систем и инфраструктуры</div>
<div class="a hl" style="left:83.4px;top:538.2px;width:11.6px"></div>
<svg class="a" style="left:93.0px;top:526.3px" width="22" height="22" viewBox="0 0 22 22">
<g fill="#3a62b8"><path d="M12.9 1.8 V5" stroke="#3a62b8" stroke-width="1.6"/><path d="M9.3 4 H16.5 L12.9 8 Z"/>
<path d="M12.9 17 V20.8" stroke="#3a62b8" stroke-width="1.6"/><path d="M9.3 17.5 H16.5 L12.9 13.6 Z"/>
<path d="M1.5 10.8 H5.5" stroke="#3a62b8" stroke-width="1.6"/><path d="M4.5 7.3 L8.8 10.8 L4.5 14.3 Z"/>
<path d="M17.3 7.3 L21.6 10.8 L17.3 14.3 Z"/></g>
<rect x="8.8" y="8" width="8.2" height="5.8" fill="#9aa6b8" stroke="#56627a" stroke-width="1.1"/><rect x="10.5" y="9.3" width="4.5" height="2.8" fill="#cdd5e2"/></svg>
<div class="t" style="left:120.6px;top:531.1px;font-size:13.30px;color:#222;-webkit-text-stroke:0.1px #222;transform:scaleX(0.9624);transform-origin:0 0;">A2.2 Информационная безопасность</div></div>
<div class="a" style="left:590.7px;top:222.7px;width:66.3px;height:530.3px;background:#e9ecef"></div>
<div class="a" style="left:625.7px;top:226.2px;width:26.9px;height:88.6px;background:linear-gradient(90deg,#dde1e6,#d5dae0);border:1px solid #c3c8cf;box-sizing:border-box"></div>
<div class="a" style="left:625.7px;top:314.6px;width:26.9px;height:92.2px;background:linear-gradient(90deg,#dde1e6,#d5dae0);border:1px solid #b3b9c2;box-sizing:border-box"></div>
<div class="a" style="left:623.2px;top:406.6px;width:29.6px;height:41.4px;background:linear-gradient(90deg,#dde1e6,#d5dae0);border:1px solid #b3b9c2;box-sizing:border-box"></div>
<div class="a" style="left:591.0px;top:329.7px;width:32.2px;height:103.0px;background:linear-gradient(90deg,#dde1e6,#d5dae0);border:1px solid #b3b9c2;box-sizing:border-box"></div>
<div class="a" style="left:591.0px;top:432.5px;width:32.2px;height:183.8px;background:linear-gradient(90deg,#dde1e6,#d5dae0);border:1px solid #b3b9c2;box-sizing:border-box"></div>
<div class="a" style="left:591.0px;top:616.3px;width:32.2px;height:117.0px;background:linear-gradient(90deg,#dde1e6,#d5dae0);border:1px solid #b3b9c2;box-sizing:border-box"></div>
<div class="a" style="left:591.0px;top:224.9px;width:34.5px;height:105.0px;background:#fff;border:1px solid #c3c9d0;border-left:none;box-sizing:border-box"></div>
<div class="t" style="left:602.0px;top:260.5px;font-size:12.8px;color:#454545;writing-mode:vertical-rl;line-height:14.7px">Процессы</div>
<div class="t" style="left:631.1px;top:260.5px;font-size:12.8px;color:#454545;writing-mode:vertical-rl;line-height:14.7px">Группы</div>
<div class="t" style="left:599.9px;top:364.8px;font-size:12.8px;color:#454545;writing-mode:vertical-rl;line-height:14.7px">Субъекты</div>
<div class="t" style="left:631.1px;top:351.3px;font-size:12.8px;color:#454545;writing-mode:vertical-rl;line-height:14.7px">Отчеты</div>
<div class="t" style="left:599.9px;top:469.5px;font-size:12.8px;color:#454545;writing-mode:vertical-rl;line-height:14.7px">Объекты деятельности</div>
<div class="t" style="left:599.9px;top:652.5px;font-size:12.8px;color:#454545;writing-mode:vertical-rl;line-height:14.7px">Управление</div>
<svg class="a" style="left:603px;top:236px" width="18" height="14" viewBox="0 0 18 14"><defs><linearGradient id="chev" x1="0" y1="0" x2="0" y2="1"><stop offset="0" stop-color="#e6eefb"/><stop offset="1" stop-color="#9fb8e6"/></linearGradient></defs><path d="M0.7 0.7 H12.5 L17 7 L12.5 13.3 H0.7 L3.5 7 Z" fill="url(#chev)" stroke="#6f8fc8" stroke-width="1"/></svg>
<svg class="a" style="left:628px;top:234px" width="21" height="19" viewBox="0 0 21 19"><path d="M5.660000000000001 4.3 L9.8 6.6 L9.8 11.2 L5.660000000000001 8.899999999999999Z" fill="#f0c000"/><path d="M13.940000000000001 4.3 L9.8 6.6 L9.8 11.2 L13.940000000000001 8.899999999999999Z" fill="#d8a400"/><path d="M9.8 2.0 L13.940000000000001 4.3 L9.8 6.6 L5.660000000000001 4.3Z" fill="#ffe45a"/><path d="M9.8 2.0 L13.940000000000001 4.3 L13.940000000000001 8.899999999999999 L9.8 11.2 L5.660000000000001 8.899999999999999 L5.660000000000001 4.3Z" fill="none" stroke="#b58c00" stroke-width="0.7"/><path d="M1.0600000000000005 10.6 L5.2 12.899999999999999 L5.2 17.5 L1.0600000000000005 15.2Z" fill="#f0c000"/><path d="M9.34 10.6 L5.2 12.899999999999999 L5.2 17.5 L9.34 15.2Z" fill="#d8a400"/><path d="M5.2 8.3 L9.34 10.6 L5.2 12.899999999999999 L1.0600000000000005 10.6Z" fill="#ffe45a"/><path d="M5.2 8.3 L9.34 10.6 L9.34 15.2 L5.2 17.5 L1.0600000000000005 15.2 L1.0600000000000005 10.6Z" fill="none" stroke="#b58c00" stroke-width="0.7"/><path d="M10.46 10.6 L14.6 12.899999999999999 L14.6 17.5 L10.46 15.2Z" fill="#f0c000"/><path d="M18.74 10.6 L14.6 12.899999999999999 L14.6 17.5 L18.74 15.2Z" fill="#d8a400"/><path d="M14.6 8.3 L18.74 10.6 L14.6 12.899999999999999 L10.46 10.6Z" fill="#ffe45a"/><path d="M14.6 8.3 L18.74 10.6 L18.74 15.2 L14.6 17.5 L10.46 15.2 L10.46 10.6Z" fill="none" stroke="#b58c00" stroke-width="0.7"/></svg>
<svg class="a" style="left:631px;top:327px" width="15" height="17" viewBox="0 0 15 17"><rect x="1.5" y="0.5" width="13" height="16" rx="1" fill="#2ea043" stroke="#1d6b2a"/><rect x="3" y="2" width="8" height="1.5" fill="#8fe09a"/><g fill="#333"><rect x="0" y="2" width="3" height="1"/><rect x="0" y="5" width="3" height="1"/><rect x="0" y="8" width="3" height="1"/><rect x="0" y="11" width="3" height="1"/><rect x="0" y="14" width="3" height="1"/></g></svg>
<svg class="a" style="left:599px;top:339px" width="21" height="19" viewBox="0 0 21 19"><circle cx="6" cy="5" r="3.5" fill="#e8b04a"/><circle cx="15" cy="5" r="3.5" fill="#9a5cc4"/><path d="M1 14 Q6 7 11 14 Z" fill="#36a852"/><path d="M10 14 Q15 7 20 14 Z" fill="#d8463a"/><circle cx="10.5" cy="8" r="3.5" fill="#f1c58f" stroke="#5a3b1a" stroke-width="0.8"/><path d="M6.5 6.8 Q10.5 3 14.5 6.8 Z" fill="#4a2d12"/><path d="M5 18.5 Q10.5 9.5 16 18.5 Z" fill="#2e86d6"/></svg>
<svg class="a" style="left:629px;top:417px" width="17" height="19" viewBox="0 0 17 19"><path d="M3.5 3.5 H11 L15.5 8 V18 H3.5 Z" fill="#f4f6fa" stroke="#5a6678" stroke-width="1.1"/><path d="M11 3.5 V8 H15.5" fill="#dfe5ee" stroke="#5a6678" stroke-width="1"/><circle cx="3.5" cy="3.5" r="3" fill="#ffe36a" opacity="0.9"/><circle cx="3.5" cy="3.5" r="1.5" fill="#fff7c0"/></svg>
<svg class="a" style="left:600px;top:443px" width="19" height="18" viewBox="0 0 19 18"><path d="M0.5 2.5 H6 L7.5 4 H14 V13 H0.5 Z" fill="#f7df7a" stroke="#c9a43a" stroke-width="0.8"/><path d="M0.5 5.5 H14 V13 H0.5Z" fill="#fdf0a8"/><path d="M13 8 L17 10 L17 15 L13 17.3 L9 15 L9 10 Z" fill="#e0401a" stroke="#9c2a10" stroke-width="0.8"/><path d="M9 10 L13 12 L17 10" stroke="#ff8a6a" fill="none" stroke-width="0.8"/></svg>
<svg class="a" style="left:599.5px;top:626px" width="19" height="19" viewBox="0 0 19 19"><g stroke="#e39a00" stroke-width="2" stroke-linecap="round"><path d="M9.5 0.8 V18.2 M0.8 9.5 H18.2 M3.3 3.3 L15.7 15.7 M15.7 3.3 L3.3 15.7"/></g><circle cx="9.5" cy="9.5" r="6" fill="#ffd23a" stroke="#e39a00" stroke-width="1.6"/><circle cx="9.5" cy="9.5" r="3.5" fill="none" stroke="#f0a800" stroke-width="0.8"/><g stroke="#f2a200" stroke-width="0.8"><path d="M9.5 4 V15 M4 9.5 H15 M5.6 5.6 L13.4 13.4 M13.4 5.6 L5.6 13.4"/></g><circle cx="9.5" cy="9.5" r="1.6" fill="#f08000"/></svg>
<svg class="a" style="left:8.5px;top:195.5px" width="17" height="18" viewBox="0 0 17 18"><defs><linearGradient id="npg" x1="0" y1="0" x2="0" y2="1"><stop offset="0" stop-color="#9aa8bc"/><stop offset="1" stop-color="#5f6f86"/></linearGradient></defs><rect x="0.9" y="1.2" width="12.4" height="15.6" rx="0.8" fill="#f0f4f9" stroke="url(#npg)" stroke-width="1.7"/><g stroke="#a3adbb" stroke-width="0.9"><path d="M3.2 4.5 H8 M3.2 7.3 H7 M3.2 10.1 H6.5 M3.2 12.9 H10.5"/></g><path d="M5 11.2 L13.3 2.2 L15.4 4.2 L7 13 L4.3 13.8 Z" fill="#d8cf70" stroke="#7d7335" stroke-width="0.8" stroke-linejoin="round"/><path d="M13.3 2.2 L14.5 0.9 L16.6 2.9 L15.4 4.2Z" fill="#de8a86" stroke="#a55a55" stroke-width="0.6"/></svg>
<div class="t" style="left:29.5px;top:198.5px;font-size:13.30px;color:#3a3a3a;;transform:scaleX(1.0070);transform-origin:0 0;">Свойства</div>
<svg class="a" style="left:99.5px;top:196px" width="19" height="19" viewBox="0 0 19 19"><rect x="0.8" y="0.8" width="17.4" height="17.4" fill="#f2f5fb" stroke="#3e59b5" stroke-width="1.6"/><rect x="3.5" y="3.5" width="5" height="5" fill="#4a78d0"/><path d="M6 8 V14 H11" stroke="#4a78d0" stroke-width="1.2" fill="none"/><path d="M14 3 V14" stroke="#8aa0d8" stroke-width="1" stroke-dasharray="1.5 1"/><path d="M11 12 L14 14 L11 16Z" fill="#4a78d0"/></svg>
<div class="a" style="left:126.5px;top:197.0px;width:1.0px;height:17.0px;background:#aab0b8"></div>
<svg class="a" style="left:132px;top:196px" width="19" height="18" viewBox="0 0 19 18"><path d="M4 1 H14 V6 H4Z" fill="#fff" stroke="#7a8594" stroke-width="0.9"/><path d="M1 7 Q1 5.5 3 5.5 H16 Q18 5.5 18 7 V14 H1Z" fill="#cfd5dd" stroke="#6a7482" stroke-width="1"/><rect x="1" y="11" width="17" height="5.5" fill="#9aa3af" stroke="#5e6773" stroke-width="0.8"/><circle cx="14.5" cy="13" r="1.6" fill="#2ec040"/></svg>
<div class="t" style="left:155.5px;top:198.5px;font-size:13.30px;color:#3a3a3a;;transform:scaleX(1.0159);transform-origin:0 0;">Отчеты</div>
<svg class="a" style="left:207.5px;top:203px" width="8" height="5"><path d="M0.5 0.5 H7.5 L4 4.5Z" fill="#333"/></svg>
<div class="a" style="left:224.7px;top:197.0px;width:1.0px;height:17.0px;background:#aab0b8"></div>
<svg class="a" style="left:232px;top:197px" width="19" height="18" viewBox="0 0 19 18"><path d="M2 16 Q2 6 11 5.5 V1.5 L18 7.5 L11 13 V9.5 Q5.5 9.5 2 16Z" fill="#2f7fd8" stroke="#1a5aa8" stroke-width="0.8"/></svg>
<svg class="a" style="left:260px;top:196.5px" width="14" height="17" viewBox="0 0 14 17"><path d="M0.7 0.7 H9 L13 4.7 V16.3 H0.7Z" fill="#fbfcf6" stroke="#7a828c" stroke-width="1.1"/><path d="M9 0.7 V4.7 H13" fill="#e6e9ee" stroke="#7a828c" stroke-width="0.9"/><path d="M13 5 V16.3 H1" stroke="#4d5560" stroke-width="1" fill="none"/><path d="M3.5 8.5 A3.3 3.3 0 0 1 9.5 7" stroke="#7cb030" stroke-width="1.6" fill="none"/><path d="M10 10 A3.3 3.3 0 0 1 4 11.5" stroke="#7cb030" stroke-width="1.6" fill="none"/><path d="M8.5 5 L10.8 7.8 L7.6 8.2Z" fill="#7cb030"/><path d="M5 13.5 L2.7 10.7 L5.9 10.3Z" fill="#7cb030"/></svg>
<svg class="a" style="left:286px;top:197.5px" width="17" height="15" viewBox="0 0 17 15"><defs><linearGradient id="flt" x1="0" y1="0" x2="0" y2="1"><stop offset="0" stop-color="#a9c8f2"/><stop offset="1" stop-color="#4f84d6"/></linearGradient></defs><path d="M0.5 1.2 Q8.5 -0.3 16.5 1.2 L10.5 7.5 V14.3 H6.5 V7.5Z" fill="url(#flt)" stroke="#4a78c0" stroke-width="0.7"/><path d="M1.5 1.5 Q8.5 0.3 15.5 1.5 L14.8 2.5 Q8.5 1.5 2.2 2.5Z" fill="#d7e6fa"/></svg>
<div class="a" style="left:308.5px;top:192.5px;width:27.4px;height:25.3px;background:linear-gradient(#fde68f,#fcdc6c);border:1px solid #f6d675;box-sizing:border-box"></div>
<svg class="a" style="left:312px;top:201.8px" width="19" height="9" viewBox="0 0 19 9"><rect x="1" y="1" width="8.5" height="6.5" rx="3.2" fill="#cdd2da" stroke="#4f5764" stroke-width="1.6"/><rect x="9" y="1" width="8.5" height="6.5" rx="3.2" fill="#cdd2da" stroke="#4f5764" stroke-width="1.6"/><rect x="5.5" y="3.5" width="8" height="1.6" fill="#3f4652"/></svg>
<div class="a" style="left:662.7px;top:190.0px;width:617.3px;height:563.0px;background:#eceef1;border-left:1px solid #a3a9b1;box-sizing:border-box"></div>
<div class="a" style="left:662.7px;top:189.9px;width:4.0px;height:1.0px;background:#a3a9b1"></div>
<div class="a" style="left:1138.5px;top:189.9px;width:141.5px;height:1.0px;background:#a3a9b1"></div>
<div class="a" style="left:666.3px;top:165.4px;width:473.2px;height:25.0px;background:linear-gradient(#f0f2f4,#eaedf0);border:1px solid #a3a9b1;border-bottom:none;box-sizing:border-box"></div>
<div class="t" style="left:675.8px;top:172.1px;font-size:13.30px;color:#4a4e56;;transform:scaleX(0.9658);transform-origin:0 0;">Процедура: A2.1.1.2.3 Управление мощностями (Capacity Management)</div>
<svg class="a" style="left:1120.5px;top:174px" width="11" height="9" viewBox="0 0 11 9"><path d="M1 0.8 L10 8.2 M10 0.8 L1 8.2" stroke="#404040" stroke-width="2"/></svg>
<div class="a" style="left:667.0px;top:194.8px;width:613.0px;height:28.0px;background:linear-gradient(#fdfdfe,#f6f7f9 50%,#eceef1);border-radius:5px 0 0 5px"></div>
<svg class="a" style="left:671.5px;top:200px" width="17" height="18" viewBox="0 0 17 18"><defs><linearGradient id="npg" x1="0" y1="0" x2="0" y2="1"><stop offset="0" stop-color="#9aa8bc"/><stop offset="1" stop-color="#5f6f86"/></linearGradient></defs><rect x="0.9" y="1.2" width="12.4" height="15.6" rx="0.8" fill="#f0f4f9" stroke="url(#npg)" stroke-width="1.7"/><g stroke="#a3adbb" stroke-width="0.9"><path d="M3.2 4.5 H8 M3.2 7.3 H7 M3.2 10.1 H6.5 M3.2 12.9 H10.5"/></g><path d="M5 11.2 L13.3 2.2 L15.4 4.2 L7 13 L4.3 13.8 Z" fill="#d8cf70" stroke="#7d7335" stroke-width="0.8" stroke-linejoin="round"/><path d="M13.3 2.2 L14.5 0.9 L16.6 2.9 L15.4 4.2Z" fill="#de8a86" stroke="#a55a55" stroke-width="0.6"/></svg>
<div class="t" style="left:692.2px;top:202.1px;font-size:13.30px;color:#3a3a3a;;transform:scaleX(1.0104);transform-origin:0 0;">Свойства</div>
<div class="a" style="left:762.8px;top:199.0px;width:1.2px;height:18.0px;background:#a9afb7"></div>
<div class="a" style="left:796.8px;top:199.0px;width:1.2px;height:18.0px;background:#a9afb7"></div>
<div class="a" style="left:858.0px;top:199.0px;width:1.2px;height:18.0px;background:#a9afb7"></div>
<div class="a" style="left:918.9px;top:199.0px;width:1.2px;height:18.0px;background:#a9afb7"></div>
<div class="a" style="left:979.8px;top:199.0px;width:1.2px;height:18.0px;background:#a9afb7"></div>
<div class="a" style="left:1014.2px;top:199.0px;width:1.2px;height:18.0px;background:#a9afb7"></div>
<div class="a" style="left:1075.3px;top:199.0px;width:1.2px;height:18.0px;background:#a9afb7"></div>
<div class="a" style="left:1136.4px;top:199.0px;width:1.2px;height:18.0px;background:#a9afb7"></div>
<div class="a" style="left:1197.6px;top:199.0px;width:1.2px;height:18.0px;background:#a9afb7"></div>
<div class="a" style="left:1278.8px;top:199.0px;width:1.2px;height:18.0px;background:#a9afb7"></div>
<svg class="a" style="left:770px;top:201px" width="17" height="16" viewBox="0 0 17 16"><rect x="0.5" y="0.5" width="16" height="15" rx="1" fill="#4a4fb8" stroke="#2a2e80" stroke-width="0.8"/><rect x="3" y="1" width="11" height="7" fill="#e8ecf8"/><rect x="5" y="10" width="7" height="5" fill="#2a2e80"/><rect x="6" y="11" width="2" height="3" fill="#c0c8e8"/></svg>
<div class="a" style="left:799.8px;top:195.7px;width:54.2px;height:25.8px;background:linear-gradient(#fde9a0,#fbd964);border:1px solid #f2cd5a;box-sizing:border-box"></div>
<div class="a" style="left:826.5px;top:196.0px;width:1.0px;height:25.0px;background:#f0c850"></div>
<svg class="a" style="left:806px;top:199px" width="18" height="19" viewBox="0 0 18 19"><path d="M3 8 A6 6 0 0 1 12 3" stroke="#4a6a98" stroke-width="1.3" fill="none"/><path d="M11 1 L14 3.5 L10.5 5Z" fill="#4a6a98"/><path d="M15 11 A6 6 0 0 1 6 16" stroke="#4a6a98" stroke-width="1.3" fill="none"/><path d="M7 18 L4 15.5 L7.5 14Z" fill="#4a6a98"/><text x="5" y="12.5" font-size="7" font-family="Liberation Sans" font-weight="bold" fill="#4a6a98">A</text><text x="11" y="11" font-size="6" font-family="Liberation Sans" font-weight="bold" fill="#4a6a98">1</text></svg>
<svg class="a" style="left:830px;top:199px" width="20" height="19" viewBox="0 0 20 19"><rect x="2.5" y="3.5" width="16" height="14" rx="3" fill="#eef2f8" stroke="#6a7a90" stroke-width="1"/><rect x="0" y="0" width="8" height="8" fill="#fbe08a"/><path d="M0.5 1 H7 M3.75 1 V7.5" stroke="#333" stroke-width="1.2"/><ellipse cx="12.5" cy="13" rx="6" ry="3.8" fill="#4a6ea8"/><circle cx="12.5" cy="13" r="2" fill="#fff"/><circle cx="12.5" cy="13" r="1" fill="#234"/></svg>
<svg class="a" style="left:864px;top:199px" width="19" height="19" viewBox="0 0 19 19"><rect x="0.7" y="0.7" width="12" height="12" rx="1.5" fill="#cfe0f6" stroke="#4a7ac0" stroke-width="1.2"/><rect x="6" y="6" width="12.3" height="12.3" rx="1.5" fill="#dce9fa" stroke="#4a7ac0" stroke-width="1.2"/><path d="M8 15 Q8 9 12 9 V6.5 L15.5 10 L12 13 V11 Q10 11 8 15Z" fill="#22a838"/></svg>
<svg class="a" style="left:891.5px;top:200px" width="18" height="18" viewBox="0 0 18 18"><g fill="#4a90d8"><path d="M9 0.5 L12.5 4 H5.5Z"/><path d="M9 17.5 L12.5 14 H5.5Z"/><path d="M0.5 9 L4 5.5 V12.5Z"/><path d="M17.5 9 L14 5.5 V12.5Z"/></g><rect x="5.5" y="5.5" width="7" height="7" fill="#dde8f5" stroke="#7a9ac0" stroke-width="1"/></svg>
<svg class="a" style="left:926.5px;top:201px" width="17" height="16" viewBox="0 0 17 16"><rect x="0.6" y="0.6" width="15.8" height="14.8" fill="#f4f6fa" stroke="#4f5f78" stroke-width="1.1"/><rect x="1" y="12" width="15" height="3" fill="#7a8ab0"/><text x="2.5" y="10" font-size="8" font-family="Liberation Sans" font-weight="bold" fill="#222">A</text><path d="M9 5 H14 M9 8 H14" stroke="#555" stroke-width="0.9"/></svg>
<svg class="a" style="left:953px;top:200px" width="17" height="17" viewBox="0 0 17 17"><path d="M1 14 Q3 8 7 7 L10 10 Q9 14 3 16Z" fill="#e2c878" stroke="#9a8040" stroke-width="0.8"/><path d="M8 6 L13 1 L16 4 L11 9Z" fill="#8a7ab8" stroke="#5a4a88" stroke-width="0.8"/></svg>
<svg class="a" style="left:987px;top:199px" width="18" height="19" viewBox="0 0 18 19"><circle cx="7" cy="12" r="5.8" fill="#e6e6e6" stroke="#777" stroke-width="1.3"/><path d="M7 9 V12 H9" stroke="#555" stroke-width="1" fill="none"/><rect x="5.5" y="4" width="3" height="2" fill="#777"/><path d="M12 9 V0.5" stroke="#2a8a3a" stroke-width="1"/><path d="M12.5 0.5 L17.5 3.5 L12.5 6.5Z" fill="#22b040"/></svg>
<svg class="a" style="left:1024px;top:203px" width="14" height="10" viewBox="0 0 14 10"><path d="M7 0.5 L13.5 6 H10 V9 H4 V6 H0.5Z" fill="#2f7fe0"/><path d="M7 0.5 L13.5 6 H0.5Z" fill="#5aa0f0"/></svg>
<svg class="a" style="left:1050.5px;top:203px" width="13" height="10" viewBox="0 0 13 10"><path d="M6.5 9.5 L0.5 4 H3.5 V1 H9.5 V4 H12.5Z" fill="#b8bcc2"/></svg>
<svg class="a" style="left:1086.5px;top:201px" width="8" height="14" viewBox="0 0 8 14"><path d="M7.5 0.5 V13.5 L0.5 7Z" fill="#b8bcc2"/></svg>
<svg class="a" style="left:1116px;top:201px" width="8" height="14" viewBox="0 0 8 14"><path d="M0.5 0.5 V13.5 L7.5 7Z" fill="#b8bcc2"/></svg>
<svg class="a" style="left:1145px;top:203px" width="16" height="10" viewBox="0 0 16 10"><circle cx="4.5" cy="5" r="3.6" fill="none" stroke="#b8bcc2" stroke-width="1.5"/><path d="M8 5 H15.5" stroke="#b8bcc2" stroke-width="1.5"/></svg>
<svg class="a" style="left:1171px;top:202px" width="16" height="12" viewBox="0 0 16 12"><path d="M0 6 H9" stroke="#b8bcc2" stroke-width="1.5"/><path d="M8.5 1 L15 6 L8.5 11Z" fill="none" stroke="#b8bcc2" stroke-width="1.5"/></svg>
<svg class="a" style="left:1203px;top:200px" width="18" height="17" viewBox="0 0 18 17"><rect x="5" y="0.5" width="12" height="13" fill="#e6e8eb" stroke="#b8bcc2"/><rect x="9" y="3" width="4" height="5" fill="#c8ccd2"/><path d="M0.5 12 L5 8.5 V10.5 H11 V13.5 H5 V15.5Z" fill="#b8bcc2"/></svg>
<svg class="a" style="left:1228px;top:206px" width="7" height="4"><path d="M0 0 H7 L3.5 4Z" fill="#b8bcc2"/></svg>
<svg class="a" style="left:1242px;top:200px" width="18" height="18" viewBox="0 0 18 18"><rect x="0.5" y="0.5" width="12" height="13" fill="#e6e8eb" stroke="#b8bcc2"/><rect x="3" y="3" width="4" height="5" fill="#c8ccd2"/><path d="M17.5 12.5 L13 9 V11 H6 V14 H13 V16Z" fill="#b8bcc2"/></svg>
<svg class="a" style="left:1266.5px;top:206px" width="7" height="4"><path d="M0 0 H7 L3.5 4Z" fill="#b8bcc2"/></svg>
<div class="a" style="left:667.0px;top:224.6px;width:27.4px;height:528.4px;background:linear-gradient(90deg,#fbfbfc,#f2f4f6)"></div>
<svg class="a" style="left:667px;top:224.6px" width="27" height="290" viewBox="667 224.6 27 290">
<g fill="none" stroke="#3b4c6c" stroke-width="1.2"><rect x="671" y="229" width="3.3" height="2.9" fill="#fff"/><path d="M674.3 230.4 H679.2 V243.5 H685.2"/><rect x="685.2" y="241.8" width="3.6" height="3.4" fill="#fff"/>
<rect x="671" y="255.6" width="3.3" height="2.9" fill="#fff"/><path d="M674.3 257 H679.2 V270.8 H685.2"/><rect x="685.2" y="269.1" width="3.6" height="3.4" fill="#fff"/></g>
<g fill="#3b4c6c"><path d="M675 260.5 L683.4 260.5 L679.2 264.5Z"/><path d="M675 264.3 L683.4 264.3 L679.2 268.3Z"/></g>
<defs><linearGradient id="pg1" x1="0" y1="0" x2="0" y2="1"><stop offset="0" stop-color="#f3f6fc"/><stop offset="1" stop-color="#c9d8f2"/></linearGradient></defs>
<rect x="671.3" y="285.4" width="16.8" height="11.6" rx="2.5" fill="url(#pg1)" stroke="#6f93c8" stroke-width="1.1"/>
<path d="M671.3 318 L679.7 311.3 L688.1 318 L679.7 324.7Z" fill="url(#pg1)" stroke="#7f9fc8" stroke-width="1.1"/>
<rect x="671.3" y="340.8" width="17" height="8.4" rx="4.2" fill="url(#pg1)" stroke="#6f93c8" stroke-width="1.1"/>
<path d="M671.5 371.8 H688" stroke="#4f84d0" stroke-width="2"/><path d="M679.7 363 V381" stroke="#b5c8e8" stroke-width="1.5"/>
<path d="M669.5 390.3 H691" stroke="#a9afb7" stroke-width="1"/>
<rect x="671" y="402.5" width="17.5" height="11" fill="#f4f6fa" stroke="#506080" stroke-width="1"/><rect x="671.5" y="410" width="16.5" height="3.5" fill="#7a8ab0"/><text x="673" y="410" font-size="7.5" font-family="Liberation Sans" font-weight="bold" fill="#222">A</text><path d="M680 397.5 H685 V395 L689 399.5 L685 404 V401.5 H680Z" fill="#3a80e0"/>
<rect x="671.8" y="425.6" width="16.2" height="15.6" fill="#e4e6e9" stroke="#c4c8cd" stroke-width="1"/><rect x="672.5" y="436" width="14.8" height="4.5" fill="#d2d5d9"/>
<path d="M669.5 451.4 H691" stroke="#a9afb7" stroke-width="1"/>
<circle cx="679.7" cy="468.8" r="6" fill="#fff" stroke="#e03a2a" stroke-width="2"/><path d="M679.7 465 V469 H682.5" stroke="#e03a2a" stroke-width="1.2" fill="none"/><path d="M673 463.5 L675.5 461 M686.5 463.5 L684 461" stroke="#f0a020" stroke-width="2"/><path d="M674.5 475 L673 477 M685 475 L686.5 477" stroke="#e03a2a" stroke-width="1.2"/>
<rect x="672" y="485.6" width="6.5" height="6" fill="#4a8ad0" stroke="#1f5a9a" stroke-width="0.8"/><path d="M678.5 488.6 H687 M685 486.5 L687.5 488.6 L685 490.7" stroke="#1f5a9a" stroke-width="1.2" fill="none"/>
<rect x="681" y="495.2" width="6.5" height="6" fill="#4a8ad0" stroke="#1f5a9a" stroke-width="0.8"/><path d="M672 498.2 H680.5 M678.5 496 L681 498.2 L678.5 500.4" stroke="#1f5a9a" stroke-width="1.2" fill="none"/>
</svg>
<svg class="a" style="left:0;top:0" width="1280" height="753" viewBox="0 0 1280 753"><rect x="694.4" y="223.7" width="586" height="530" fill="#c6e4c6"/>
<rect x="701.8" y="245.2" width="580" height="510" fill="#fff"/>
<path d="M707.62 245.2 V753" stroke="#dedede" stroke-width="1.3"/>
<path d="M725.48 245.2 V753" stroke="#dedede" stroke-width="1.3"/>
<path d="M743.34 245.2 V753" stroke="#dedede" stroke-width="1.3"/>
<path d="M761.20 245.2 V753" stroke="#dedede" stroke-width="1.3"/>
<path d="M779.06 245.2 V753" stroke="#dedede" stroke-width="1.3"/>
<path d="M796.92 245.2 V753" stroke="#dedede" stroke-width="1.3"/>
<path d="M814.78 245.2 V753" stroke="#dedede" stroke-width="1.3"/>
<path d="M832.64 245.2 V753" stroke="#dedede" stroke-width="1.3"/>
<path d="M850.50 245.2 V753" stroke="#dedede" stroke-width="1.3"/>
<path d="M868.36 245.2 V753" stroke="#dedede" stroke-width="1.3"/>
<path d="M886.22 245.2 V753" stroke="#dedede" stroke-width="1.3"/>
<path d="M904.08 245.2 V753" stroke="#dedede" stroke-width="1.3"/>
<path d="M921.94 245.2 V753" stroke="#dedede" stroke-width="1.3"/>
<path d="M939.80 245.2 V753" stroke="#dedede" stroke-width="1.3"/>
<path d="M957.66 245.2 V753" stroke="#dedede" stroke-width="1.3"/>
<path d="M975.52 245.2 V753" stroke="#dedede" stroke-width="1.3"/>
<path d="M993.38 245.2 V753" stroke="#dedede" stroke-width="1.3"/>
<path d="M1011.24 245.2 V753" stroke="#dedede" stroke-width="1.3"/>
<path d="M1029.10 245.2 V753" stroke="#dedede" stroke-width="1.3"/>
<path d="M1046.96 245.2 V753" stroke="#dedede" stroke-width="1.3"/>
<path d="M1064.82 245.2 V753" stroke="#dedede" stroke-width="1.3"/>
<path d="M1082.68 245.2 V753" stroke="#dedede" stroke-width="1.3"/>
<path d="M1100.54 245.2 V753" stroke="#dedede" stroke-width="1.3"/>
<path d="M1118.40 245.2 V753" stroke="#dedede" stroke-width="1.3"/>
<path d="M1136.26 245.2 V753" stroke="#dedede" stroke-width="1.3"/>
<path d="M1154.12 245.2 V753" stroke="#dedede" stroke-width="1.3"/>
<path d="M1171.98 245.2 V753" stroke="#dedede" stroke-width="1.3"/>
<path d="M1189.84 245.2 V753" stroke="#dedede" stroke-width="1.3"/>
<path d="M1207.70 245.2 V753" stroke="#dedede" stroke-width="1.3"/>
<path d="M1225.56 245.2 V753" stroke="#dedede" stroke-width="1.3"/>
<path d="M1243.42 245.2 V753" stroke="#dedede" stroke-width="1.3"/>
<path d="M1261.28 245.2 V753" stroke="#dedede" stroke-width="1.3"/>
<path d="M1279.14 245.2 V753" stroke="#dedede" stroke-width="1.3"/>
<path d="M701.8 250.04 H1280" stroke="#dedede" stroke-width="1.3"/>
<path d="M701.8 267.90 H1280" stroke="#dedede" stroke-width="1.3"/>
<path d="M701.8 285.76 H1280" stroke="#dedede" stroke-width="1.3"/>
<path d="M701.8 303.62 H1280" stroke="#dedede" stroke-width="1.3"/>
<path d="M701.8 321.48 H1280" stroke="#dedede" stroke-width="1.3"/>
<path d="M701.8 339.34 H1280" stroke="#dedede" stroke-width="1.3"/>
<path d="M701.8 357.20 H1280" stroke="#dedede" stroke-width="1.3"/>
<path d="M701.8 375.06 H1280" stroke="#dedede" stroke-width="1.3"/>
<path d="M701.8 392.92 H1280" stroke="#dedede" stroke-width="1.3"/>
<path d="M701.8 410.78 H1280" stroke="#dedede" stroke-width="1.3"/>
<path d="M701.8 428.64 H1280" stroke="#dedede" stroke-width="1.3"/>
<path d="M701.8 446.50 H1280" stroke="#dedede" stroke-width="1.3"/>
<path d="M701.8 464.36 H1280" stroke="#dedede" stroke-width="1.3"/>
<path d="M701.8 482.22 H1280" stroke="#dedede" stroke-width="1.3"/>
<path d="M701.8 500.08 H1280" stroke="#dedede" stroke-width="1.3"/>
<path d="M701.8 517.94 H1280" stroke="#dedede" stroke-width="1.3"/>
<path d="M701.8 535.80 H1280" stroke="#dedede" stroke-width="1.3"/>
<path d="M701.8 553.66 H1280" stroke="#dedede" stroke-width="1.3"/>
<path d="M701.8 571.52 H1280" stroke="#dedede" stroke-width="1.3"/>
<path d="M701.8 589.38 H1280" stroke="#dedede" stroke-width="1.3"/>
<path d="M701.8 607.24 H1280" stroke="#dedede" stroke-width="1.3"/>
<path d="M701.8 625.10 H1280" stroke="#dedede" stroke-width="1.3"/>
<path d="M701.8 642.96 H1280" stroke="#dedede" stroke-width="1.3"/>
<path d="M701.8 660.82 H1280" stroke="#dedede" stroke-width="1.3"/>
<path d="M701.8 678.68 H1280" stroke="#dedede" stroke-width="1.3"/>
<path d="M701.8 696.54 H1280" stroke="#dedede" stroke-width="1.3"/>
<path d="M701.8 714.40 H1280" stroke="#dedede" stroke-width="1.3"/>
<path d="M701.8 732.26 H1280" stroke="#dedede" stroke-width="1.3"/>
<path d="M701.8 750.12 H1280" stroke="#dedede" stroke-width="1.3"/>
<rect x="707.4" y="248.8" width="571.5" height="45.3" fill="#e7edf8"/>
<rect x="707.4" y="294.1" width="45.2" height="460" fill="#e7edf8"/>
<rect x="752.6" y="294.1" width="526.3" height="44.1" fill="#e7edf8"/>
<path d="M707.5 753 V249.2 H1278.5" stroke="#6a6a6a" stroke-width="1.1" fill="none"/>
<path d="M1279.2 248.6 V753" stroke="#222" stroke-width="1.8" fill="none"/>
<path d="M707.4 294.1 H1279" stroke="#3c3c3c" stroke-width="1.8" fill="none"/>
<path d="M752.6 338.2 H1279 M752.6 294.1 V753" stroke="#3c3c3c" stroke-width="1.8" fill="none"/>
<rect x="702.5" y="245.2" width="8" height="8" fill="#fff" stroke="#999" stroke-width="0.8"/><path d="M703.5 246.5 L709.5 252" stroke="#999" stroke-width="0.8"/>
<rect x="987" y="245.2" width="8" height="8" fill="#fff" stroke="#999" stroke-width="0.8"/><path d="M988 246.5 L994 252" stroke="#999" stroke-width="0.8"/>
<rect x="1275" y="244" width="8" height="8" fill="#fff" stroke="#999" stroke-width="0.8"/>
<rect x="814.4" y="356.7" width="144.5" height="53.1" rx="26.5" fill="#e7edf8" stroke="#333" stroke-width="1.6"/>
<rect x="814.4" y="427.9" width="144" height="71" fill="#e7edf8" stroke="#333" stroke-width="1.6"/>
<path d="M814.4 438.4 L825 427.9" stroke="#333" stroke-width="1.2"/>
<rect x="814.4" y="517.3" width="144" height="71" fill="#e7edf8" stroke="#333" stroke-width="1.6"/>
<path d="M814.4 527.8 L825 517.3" stroke="#333" stroke-width="1.2"/>
<rect x="814.4" y="606.5" width="144" height="71" fill="#e7edf8" stroke="#333" stroke-width="1.6"/>
<path d="M814.4 617.0 L825 606.5" stroke="#333" stroke-width="1.2"/>
<rect x="814.4" y="696.2" width="144" height="71" fill="#e7edf8" stroke="#333" stroke-width="1.6"/>
<path d="M814.4 706.7 L825 696.2" stroke="#333" stroke-width="1.2"/>
<circle cx="886.5" cy="411" r="2" fill="#fff" stroke="#4a78c0" stroke-width="1"/>
<path d="M886.5 413 V421.9" stroke="#4a78c0" stroke-width="1.3"/><path d="M882.5 420.9 L890.5 420.9 L886.5 427.9Z" fill="#4a78c0"/>
<path d="M886.5 499.5 V511.29999999999995" stroke="#4a78c0" stroke-width="1.3"/><path d="M882.5 510.29999999999995 L890.5 510.29999999999995 L886.5 517.3Z" fill="#4a78c0"/>
<path d="M886.5 589 V600.5" stroke="#4a78c0" stroke-width="1.3"/><path d="M882.5 599.5 L890.5 599.5 L886.5 606.5Z" fill="#4a78c0"/>
<path d="M886.5 678.2 V690.2" stroke="#4a78c0" stroke-width="1.3"/><path d="M882.5 689.2 L890.5 689.2 L886.5 696.2Z" fill="#4a78c0"/>
<rect x="991" y="431" width="147" height="28" fill="#fff"/>
<rect x="1030" y="519.5" width="71" height="13" fill="#fff"/><rect x="980" y="534" width="171" height="15" fill="#fff"/>
<path d="M969 446.6 H991.5" stroke="#4a78c0" stroke-width="1.3"/><path d="M959 446.6 L968 442.6 L968 450.6Z" fill="#4a78c0"/><path d="M967 446.6 L976 442.6 L976 450.6Z" fill="#4a78c0"/><path d="M1139.4 446.6 H1169.5" stroke="#4a78c0" stroke-width="1.3"/><circle cx="1171.8" cy="446.6" r="2.5" fill="#fff" stroke="#4a78c0" stroke-width="1.1"/>
<path d="M969 535.9 H980" stroke="#4a78c0" stroke-width="1.3"/><path d="M959 535.9 L968 531.9 L968 539.9Z" fill="#4a78c0"/><path d="M967 535.9 L976 531.9 L976 539.9Z" fill="#4a78c0"/><path d="M1150.6 535.9 H1169.5" stroke="#4a78c0" stroke-width="1.3"/><circle cx="1171.8" cy="535.9" r="2.5" fill="#fff" stroke="#4a78c0" stroke-width="1.1"/></svg>
<div class="t" style="left:710.6px;top:260.0px;font-size:19.80px;color:#222;transform:scaleX(0.956);transform-origin:0 0">A2.1.1.2.3 Управление мощностями (Capacity Management)</div>
<div class="t" style="left:819.4px;top:305.5px;font-size:19.80px;color:#222;transform:scaleX(0.953);transform-origin:0 0">Управление системного администрирования</div>
<div class="t" style="left:736.6px;width:300px;text-align:center;top:361.6px;font-size:12.5px;color:#222;-webkit-text-stroke:0.15px #222">Согласно</div>
<div class="t" style="left:736.6px;width:300px;text-align:center;top:376.6px;font-size:12.5px;color:#222;-webkit-text-stroke:0.15px #222">установленной</div>
<div class="t" style="left:736.6px;width:300px;text-align:center;top:391.6px;font-size:12.5px;color:#222;-webkit-text-stroke:0.15px #222">периодичности</div>
<div class="t" style="left:736.4px;width:300px;text-align:center;top:441.7px;font-size:12.5px;color:#222;-webkit-text-stroke:0.15px #222">Анализ текущих</div>
<div class="t" style="left:736.4px;width:300px;text-align:center;top:456.9px;font-size:12.5px;color:#222;-webkit-text-stroke:0.15px #222">мощностей и их</div>
<div class="t" style="left:736.4px;width:300px;text-align:center;top:472.1px;font-size:12.5px;color:#222;-webkit-text-stroke:0.15px #222">эффективности</div>
<div class="t" style="left:736.4px;width:300px;text-align:center;top:522.8px;font-size:12.5px;color:#222;-webkit-text-stroke:0.15px #222">Сбор требований от</div>
<div class="t" style="left:736.4px;width:300px;text-align:center;top:537.8px;font-size:12.5px;color:#222;-webkit-text-stroke:0.15px #222">подразделений</div>
<div class="t" style="left:736.4px;width:300px;text-align:center;top:552.8px;font-size:12.5px;color:#222;-webkit-text-stroke:0.15px #222">организации к</div>
<div class="t" style="left:736.4px;width:300px;text-align:center;top:567.8px;font-size:12.5px;color:#222;-webkit-text-stroke:0.15px #222">мощностям</div>
<div class="t" style="left:736.4px;width:300px;text-align:center;top:611.9px;font-size:12.5px;color:#222;-webkit-text-stroke:0.15px #222">Прогнозирование</div>
<div class="t" style="left:736.4px;width:300px;text-align:center;top:626.9px;font-size:12.5px;color:#222;-webkit-text-stroke:0.15px #222">потребности в</div>
<div class="t" style="left:736.4px;width:300px;text-align:center;top:641.9px;font-size:12.5px;color:#222;-webkit-text-stroke:0.15px #222">мощностях на</div>
<div class="t" style="left:736.4px;width:300px;text-align:center;top:656.9px;font-size:12.5px;color:#222;-webkit-text-stroke:0.15px #222">будущий период</div>
<div class="t" style="left:736.4px;width:300px;text-align:center;top:707.9px;font-size:12.5px;color:#222;-webkit-text-stroke:0.15px #222">Оценка возможностей</div>
<div class="t" style="left:736.4px;width:300px;text-align:center;top:722.9px;font-size:12.5px;color:#222;-webkit-text-stroke:0.15px #222">виртуализации ИТ-</div>
<div class="t" style="left:736.4px;width:300px;text-align:center;top:737.9px;font-size:12.5px;color:#222;-webkit-text-stroke:0.15px #222">ресурсов</div>
<div class="t" style="left:914.5px;width:300px;text-align:center;top:431.0px;font-size:12.5px;color:#222;-webkit-text-stroke:0.15px #222">Информация из системы</div>
<div class="t" style="left:914.5px;width:300px;text-align:center;top:444.8px;font-size:12.5px;color:#222;-webkit-text-stroke:0.15px #222">управления мощностями</div>
<div class="t" style="left:915.0px;width:300px;text-align:center;top:520.0px;font-size:12.5px;color:#222;-webkit-text-stroke:0.15px #222">Требования</div>
<div class="t" style="left:915.0px;width:300px;text-align:center;top:534.7px;font-size:12.5px;color:#222;-webkit-text-stroke:0.15px #222">подразделений к мощностям</div>
</body></html>
